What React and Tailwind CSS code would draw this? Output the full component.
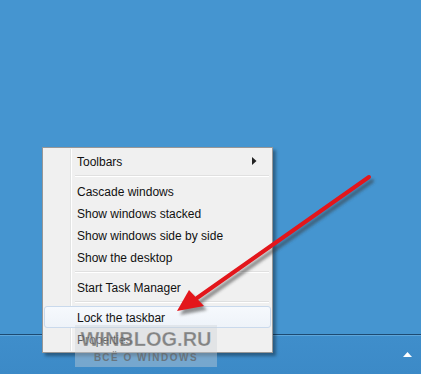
import React from "react";

const items = [
  { label: "Toolbars", sub: true },
  { sep: true },
  { label: "Cascade windows" },
  { label: "Show windows stacked" },
  { label: "Show windows side by side" },
  { label: "Show the desktop" },
  { sep: true },
  { label: "Start Task Manager" },
  { sep: true },
  { label: "Lock the taskbar", hover: true },
  { label: "Properties" },
];

const MenuItem = ({ item }) => {
  if (item.sep) {
    return (
      <div className="h-2 flex items-center pl-[31px] pr-[2px]">
        <div className="w-full h-[2px] border-t border-[#e0e0e0] border-b border-b-white" />
      </div>
    );
  }
  return (
    <div
      className={`relative h-[22px] flex items-center pl-[32px] pr-3 rounded-[3px] border ${
        item.hover
          ? "border-[#c9d9ec] bg-gradient-to-b from-[#f6f9fd] to-[#eef3f9]"
          : "border-transparent"
      }`}
    >
      <span className="flex-1 text-[12px] text-[#111] pt-px">{item.label}</span>
      {item.sub && (
        <svg width="5" height="8" viewBox="0 0 5 8" className="mr-[1px]">
          <path d="M0 0 L4.5 4 L0 8 Z" fill="#222" />
        </svg>
      )}
    </div>
  );
};

const Arrow = () => (
  <svg className="absolute inset-0 pointer-events-none" width="421" height="374">
    <defs>
      <filter id="blur" x="-20%" y="-20%" width="140%" height="140%">
        <feGaussianBlur stdDeviation="1.6" />
      </filter>
    </defs>
    <g transform="translate(3,4)" filter="url(#blur)" opacity="0.55">
      <line x1="369" y1="177" x2="197" y2="298" stroke="#3a3a3a" strokeWidth="4" strokeLinecap="round" />
      <polygon points="177,311 189,290 204,306" fill="#3a3a3a" />
    </g>
    <line x1="369" y1="177" x2="197" y2="298" stroke="#e3161b" strokeWidth="4" strokeLinecap="round" />
    <polygon points="177,311 189,290 204,306" fill="#e3161b" />
  </svg>
);

export default function App() {
  return (
    <div
      className="relative w-[421px] h-[374px] overflow-hidden bg-[#4595d0]"
      style={{ fontFamily: '"Liberation Sans", Arial, sans-serif' }}
    >
      <div className="flex flex-col h-full">
        <div className="h-[334px]" />
        {/* taskbar */}
        <div className="flex-1 border-t border-[#1d4a72] flex flex-col">
          <div className="h-px bg-[#5ea6da]" />
          <div className="flex-1 bg-gradient-to-b from-[#3f8ecb] to-[#3c8ac7] flex items-center justify-end pr-[9px]">
            <svg width="9" height="5" viewBox="0 0 9 5" className="mb-[1px]">
              <path d="M0 5 L4.5 0 L9 5 Z" fill="#fff" />
            </svg>
          </div>
        </div>
      </div>

      {/* context menu */}
      <div className="absolute left-[42px] top-[147px] w-[231px] h-[206px] border border-[#979797] bg-[#f0f0f0] px-px pt-[2px] shadow-[3px_3px_3px_rgba(0,0,0,0.35)]">
        <div className="absolute left-[27px] top-px bottom-px w-[2px] border-l border-[#e2e3e3] border-r border-r-white" />
        <div className="relative flex flex-col">
          {items.map((item, i) => (
            <MenuItem key={i} item={item} />
          ))}
        </div>
      </div>

      {/* watermark */}
      <div className="absolute left-[75px] top-[325px] w-[142px] h-[42px] bg-[rgba(205,210,215,0.4)] flex flex-col items-center justify-center leading-none">
        <span
          className="text-[20px] font-bold text-[rgba(100,100,100,0.75)]"
          style={{ WebkitTextStroke: "0.5px rgba(235,235,235,0.5)" }}
        >
          WINBLOG.RU
        </span>
        <span className="mt-[4px] text-[10px] font-bold text-[rgba(100,100,100,0.75)] tracking-[1.5px]">
          ВСЁ О WINDOWS
        </span>
      </div>

      <Arrow />
    </div>
  );
}
